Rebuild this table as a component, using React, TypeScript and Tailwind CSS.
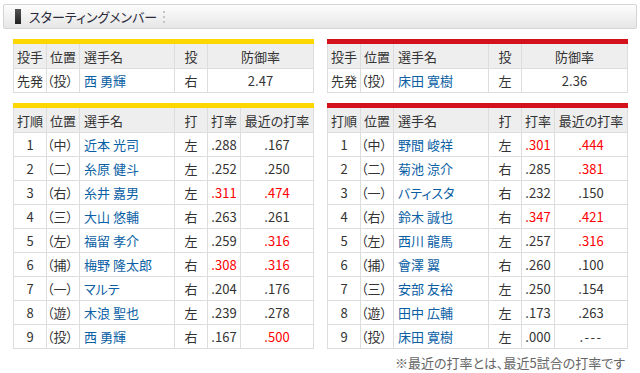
import React from "react";

type Row = { n: string; pos: string; name: string; hand: string; avg: string; avgRed?: boolean; recent: string; recentRed?: boolean };

const left: Row[] = [
  { n: "1", pos: "（中）", name: "近本 光司", hand: "左", avg: ".288", recent: ".167" },
  { n: "2", pos: "（二）", name: "糸原 健斗", hand: "左", avg: ".252", recent: ".250" },
  { n: "3", pos: "（右）", name: "糸井 嘉男", hand: "左", avg: ".311", avgRed: true, recent: ".474", recentRed: true },
  { n: "4", pos: "（三）", name: "大山 悠輔", hand: "右", avg: ".263", recent: ".261" },
  { n: "5", pos: "（左）", name: "福留 孝介", hand: "左", avg: ".259", recent: ".316", recentRed: true },
  { n: "6", pos: "（捕）", name: "梅野 隆太郎", hand: "右", avg: ".308", avgRed: true, recent: ".316", recentRed: true },
  { n: "7", pos: "（一）", name: "マルテ", hand: "右", avg: ".204", recent: ".176" },
  { n: "8", pos: "（遊）", name: "木浪 聖也", hand: "左", avg: ".239", recent: ".278" },
  { n: "9", pos: "（投）", name: "西 勇輝", hand: "右", avg: ".167", recent: ".500", recentRed: true },
];

const right: Row[] = [
  { n: "1", pos: "（中）", name: "野間 峻祥", hand: "左", avg: ".301", avgRed: true, recent: ".444", recentRed: true },
  { n: "2", pos: "（二）", name: "菊池 涼介", hand: "右", avg: ".285", recent: ".381", recentRed: true },
  { n: "3", pos: "（一）", name: "バティスタ", hand: "右", avg: ".232", recent: ".150" },
  { n: "4", pos: "（右）", name: "鈴木 誠也", hand: "右", avg: ".347", avgRed: true, recent: ".421", recentRed: true },
  { n: "5", pos: "（左）", name: "西川 龍馬", hand: "左", avg: ".257", recent: ".316", recentRed: true },
  { n: "6", pos: "（捕）", name: "會澤 翼", hand: "右", avg: ".260", recent: ".100" },
  { n: "7", pos: "（三）", name: "安部 友裕", hand: "左", avg: ".250", recent: ".154" },
  { n: "8", pos: "（遊）", name: "田中 広輔", hand: "左", avg: ".173", recent: ".263" },
  { n: "9", pos: "（投）", name: "床田 寛樹", hand: "左", avg: ".000", recent: ".---" },
];

const cell = "border-r border-b border-[#dddddd] flex items-center";

function PitcherTable({ color, name, hand, era }: { color: string; name: string; hand: string; era: string }) {
  return (
    <div className={`border-t-[5px] ${color}`}>
      <div className="grid grid-cols-[33px_33px_95px_33px_106px] h-[25px] border-l border-[#dddddd] bg-[#eeeeee]">
        <div className={`${cell} pl-[3px]`}>投手</div>
        <div className={`${cell} pl-[3px]`}>位置</div>
        <div className={`${cell} pl-[4px]`}>選手名</div>
        <div className={`${cell} justify-center`}>投</div>
        <div className={`${cell} justify-center`}>防御率</div>
      </div>
      <div className="grid grid-cols-[33px_33px_95px_33px_106px] h-[24px] border-l border-[#dddddd]">
        <div className={`${cell} pl-[3px]`}>先発</div>
        <div className={`${cell} pl-[0px]`}>（投）</div>
        <div className={`${cell} pl-[4px] text-[#0b5fa5]`}>{name}</div>
        <div className={`${cell} justify-center`}>{hand}</div>
        <div className={`${cell} justify-center`}>{era}</div>
      </div>
    </div>
  );
}

function LineupTable({ color, rows }: { color: string; rows: Row[] }) {
  return (
    <div className={`border-t-[5px] ${color}`}>
      <div className="grid grid-cols-[33px_33px_95px_33px_33px_73px] h-[25px] border-l border-[#dddddd] bg-[#eeeeee]">
        <div className={`${cell} pl-[3px]`}>打順</div>
        <div className={`${cell} pl-[3px]`}>位置</div>
        <div className={`${cell} pl-[4px]`}>選手名</div>
        <div className={`${cell} justify-center`}>打</div>
        <div className={`${cell} justify-center`}>打率</div>
        <div className={`${cell} justify-center`}>最近の打率</div>
      </div>
      {rows.map((r) => (
        <div key={r.n} className="grid grid-cols-[33px_33px_95px_33px_33px_73px] h-[24px] border-l border-[#dddddd]">
          <div className={`${cell} justify-center`}>{r.n}</div>
          <div className={`${cell} pl-[0px]`}>{r.pos}</div>
          <div className={`${cell} pl-[4px] text-[#0b5fa5]`}>{r.name}</div>
          <div className={`${cell} justify-center`}>{r.hand}</div>
          <div className={`${cell} justify-center ${r.avgRed ? "text-[#ff0000]" : ""}`}>{r.avg}</div>
          <div className={`${cell} justify-center ${r.recentRed ? "text-[#ff0000]" : ""} ${r.recent === ".---" ? "tracking-[1.5px]" : ""}`}>{r.recent}</div>
        </div>
      ))}
    </div>
  );
}

export default function App() {
  return (
    <div className="w-[640px] h-[373px] bg-white text-[13px] leading-none text-[#333333] font-['Noto_Sans_CJK_JP',sans-serif] [font-feature-settings:'palt'] overflow-hidden">
      <div className="mx-[3px] mt-[4px] h-[25px] border border-[#d4d4d4] rounded-[2px] bg-gradient-to-b from-[#fdfdfd] to-[#e6e6e6] flex items-center pl-[11px]">
        <div className="w-[6px] h-[15px] bg-gradient-to-b from-[#555555] to-[#222222]" />
        <div className="ml-[8px] text-[13px] text-[#2a2a3a]">スターティングメンバー</div>
        <div className="ml-[6px] flex flex-col gap-[3px]">
          <div className="w-[2px] h-[2px] bg-[#c4c4c4]" />
          <div className="w-[2px] h-[2px] bg-[#c4c4c4]" />
          <div className="w-[2px] h-[2px] bg-[#c4c4c4]" />
        </div>
      </div>
      <div className="mt-[10px] flex gap-[13px] pl-[13px]">
        <div className="w-[301px] flex flex-col gap-[10px]">
          <PitcherTable color="border-[#ffd700]" name="西 勇輝" hand="右" era="2.47" />
          <LineupTable color="border-[#ffd700]" rows={left} />
        </div>
        <div className="w-[301px] flex flex-col gap-[10px]">
          <PitcherTable color="border-[#d4101c]" name="床田 寛樹" hand="左" era="2.36" />
          <LineupTable color="border-[#d4101c]" rows={right} />
        </div>
      </div>
      <div className="mt-[6px] pr-[15px] text-right text-[13px] leading-[16px] text-[#666666]">※最近の打率とは、最近5試合の打率です</div>
    </div>
  );
}
